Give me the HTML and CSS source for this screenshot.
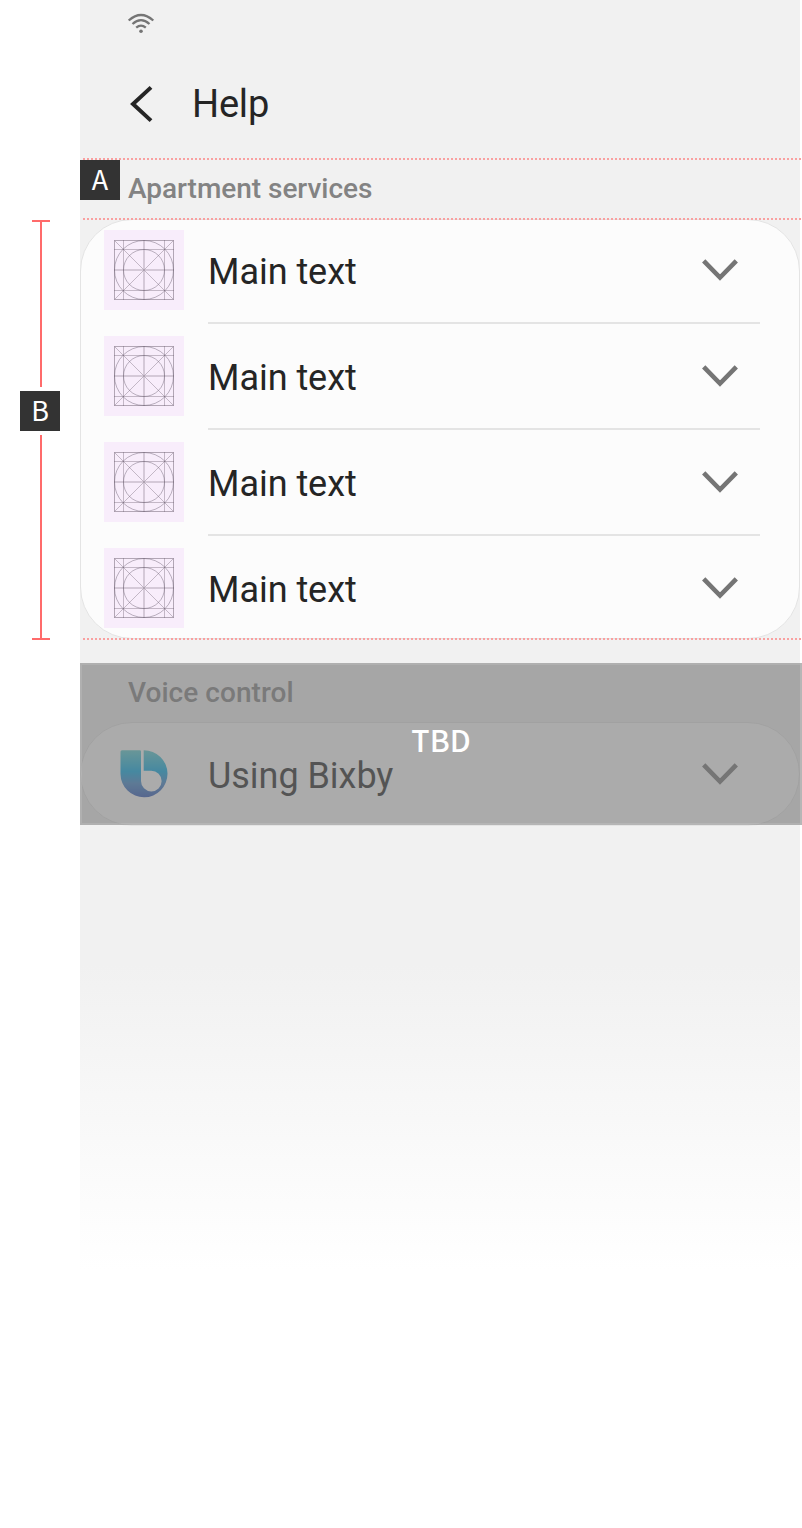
FILE: index.html
```html
<!DOCTYPE html>
<html lang="en">
<head>
<meta charset="utf-8">
<title>Help</title>
<link rel="stylesheet" href="styles.css">
</head>
<body>
<svg class="defs" width="0" height="0" aria-hidden="true">
  <symbol id="keyline" viewBox="0 0 80 80">
    <g fill="none" stroke="#6b5f70">
      <g stroke-opacity=".5"><rect x="10.5" y="10.5" width="59" height="59"/></g>
      <g stroke-opacity=".38">
        <path d="M19.500 10v60M60.500 10v60M10 19.500h60M10 60.500h60M10.500 10.500l59 59M69.500 10.500l-59 59"/>
      </g>
      <path stroke-opacity=".25" stroke-width="2" d="M40 10v60M10 40h60"/>
      <g stroke-opacity=".45"><circle cx="40" cy="40" r="29.500"/><circle cx="40" cy="40" r="20.500"/></g>
    </g>
  </symbol>
  <symbol id="chevron" viewBox="0 0 40 24">
    <path d="M3.700 2.800 20 19.500 36.300 2.800" fill="none" stroke="#757575" stroke-width="4.600"/>
  </symbol>
</svg>
<div class="page">
  <aside class="gutter">
    <div class="bracket">
      <i class="cap"></i><i class="line line-top"></i>
      <span class="tag">B</span>
      <i class="line line-bottom"></i><i class="cap"></i>
    </div>
  </aside>
  <main class="phone">
    <div class="status">
      <svg class="wifi" width="28" height="22" viewBox="0 0 28 22">
        <g fill="none" stroke="#757575" stroke-width="2.300">
          <path d="M1.700 7.500Q14-3.500 26.300 7.500"/>
          <path d="M5.500 11Q14 3.300 22.500 11"/>
          <path d="M9.200 14.700Q14 10.500 18.800 14.700"/>
        </g>
        <circle cx="14" cy="18.300" r="1.800" fill="#757575"/>
      </svg>
    </div>
    <header class="appbar">
      <svg class="back" width="24" height="40" viewBox="0 0 24 40">
        <path d="M22 3.400 4 20 22 36.600" fill="none" stroke="#252525" stroke-width="4"/>
      </svg>
      <h1>Help</h1>
    </header>
    <section class="services">
      <i class="guide guide-top"></i>
      <span class="tag tag-a">A</span>
      <h2>Apartment services</h2>
      <div class="card">
        <i class="guide guide-card"></i>
        <div class="row"><svg class="icon"><use href="#keyline"/></svg><span class="label">Main text</span><svg class="chev"><use href="#chevron"/></svg></div>
        <hr>
        <div class="row"><svg class="icon"><use href="#keyline"/></svg><span class="label">Main text</span><svg class="chev"><use href="#chevron"/></svg></div>
        <hr>
        <div class="row"><svg class="icon"><use href="#keyline"/></svg><span class="label">Main text</span><svg class="chev"><use href="#chevron"/></svg></div>
        <hr>
        <div class="row"><svg class="icon"><use href="#keyline"/></svg><span class="label">Main text</span><svg class="chev"><use href="#chevron"/></svg></div>
        <i class="guide guide-end"></i>
      </div>
    </section>
    <section class="voice">
      <h2>Voice control</h2>
      <div class="card">
        <div class="row">
          <svg class="bixby" viewBox="104 734 80 80">
            <defs><linearGradient id="bx" x1="0" y1="0" x2="0" y2="1">
              <stop offset="0" stop-color="#58c8cc"/><stop offset=".45" stop-color="#00a6e2"/>
              <stop offset=".7" stop-color="#3c82c6"/><stop offset="1" stop-color="#2a52b4"/>
            </linearGradient></defs>
            <path fill="url(#bx)" d="M122 750.300H139.800Q141 750.300 141 751.500V781A10.300 10.300 0 1 0 151.300 770.800H143.700V750.300A23.500 23.500 0 1 1 120.500 774V751.800Q120.500 750.300 122 750.300Z"/>
          </svg>
          <span class="label">Using Bixby</span><svg class="chev"><use href="#chevron"/></svg>
        </div>
      </div>
      <div class="overlay">TBD</div>
    </section>
  </main>
</div>
</body>
</html>
```

FILE: styles.css
```css
* { box-sizing: border-box; }
body { margin: 0; background: #fff; font-family: Roboto, sans-serif; color: #252525; overflow: hidden; }
h1, h2 { margin: 0; font-weight: 400; white-space: nowrap; }
svg { display: block; flex: none; }
.defs { position: absolute; }
.page { display: flex; height: 1528px; }
.gutter { width: 80px; flex: none; padding: 220px 20px 0; }
.bracket { display: flex; flex-direction: column; align-items: center; height: 420px; }
.cap { width: 18px; height: 2px; background: #ff6b6b; transform: translateX(1px); }
.line { width: 2px; background: #ff6b6b; transform: translateX(1px); }
.line-top { height: 165px; margin-bottom: 4px; }
.line-bottom { flex: 1; margin-top: 4px; }
.tag { display: block; flex: none; width: 40px; height: 40px; background: #333; color: #fff; font-family: "Noto Sans CJK KR", sans-serif; font-size: 27px; line-height: 38px; text-align: center; }
.phone { width: 720px; flex: none; background: linear-gradient(#f1f1f1 965px, #fff 1270px); }
.status { height: 50px; padding: 13px 0 0 47px; }
.appbar { height: 108px; padding-left: 49px; display: flex; align-items: center; gap: 39px; }
.appbar h1 { font-size: 38px; line-height: 44px; letter-spacing: -.2px; }
.services, .voice { position: relative; }
.services { height: 505px; padding-top: 2px; }
h2 { height: 59px; padding-left: 48px; font-size: 28px; font-weight: 500; line-height: 57px; letter-spacing: -.03px; color: #838383; }
.guide { position: absolute; left: 3px; width: 719px; height: 2px; background: repeating-linear-gradient(90deg, #f9a0a0 0 2px, transparent 2px 4px); }
.guide-top { top: 0; }
.guide-card { top: -2px; left: 2px; }
.guide-end { bottom: -2px; left: 2px; }
.tag-a { position: absolute; left: 0; top: 2px; }
.card { position: relative; border: 1px solid #e4e4e4; border-radius: 52px; background: #fcfcfc; padding: 10px 0; }
.row { height: 80px; display: flex; align-items: center; padding: 0 59px 0 23px; }
.icon { width: 80px; height: 80px; background: #f8edfb; }
.bixby { width: 80px; height: 80px; }
.label { flex: 1; margin-left: 24px; font-size: 36px; line-height: 42px; padding-top: 4px; letter-spacing: -.04px; }
.chev { width: 40px; height: 24px; }
hr { border: 0; height: 2px; margin: 12px 39px 12px 127px; background: #e4e4e4; }
.voice h2 { height: 59px; line-height: 59px; letter-spacing: .05px; }
.voice .card { padding: 11px 0; }
.overlay { position: absolute; left: 0; top: 0; width: 722px; height: 162px; border: 2px solid rgba(255,255,255,.12); background: rgba(116,116,116,.6); color: #fff; font-family: "Noto Sans CJK KR", sans-serif; font-size: 30px; font-weight: 500; line-height: 149px; text-align: center; }
```
